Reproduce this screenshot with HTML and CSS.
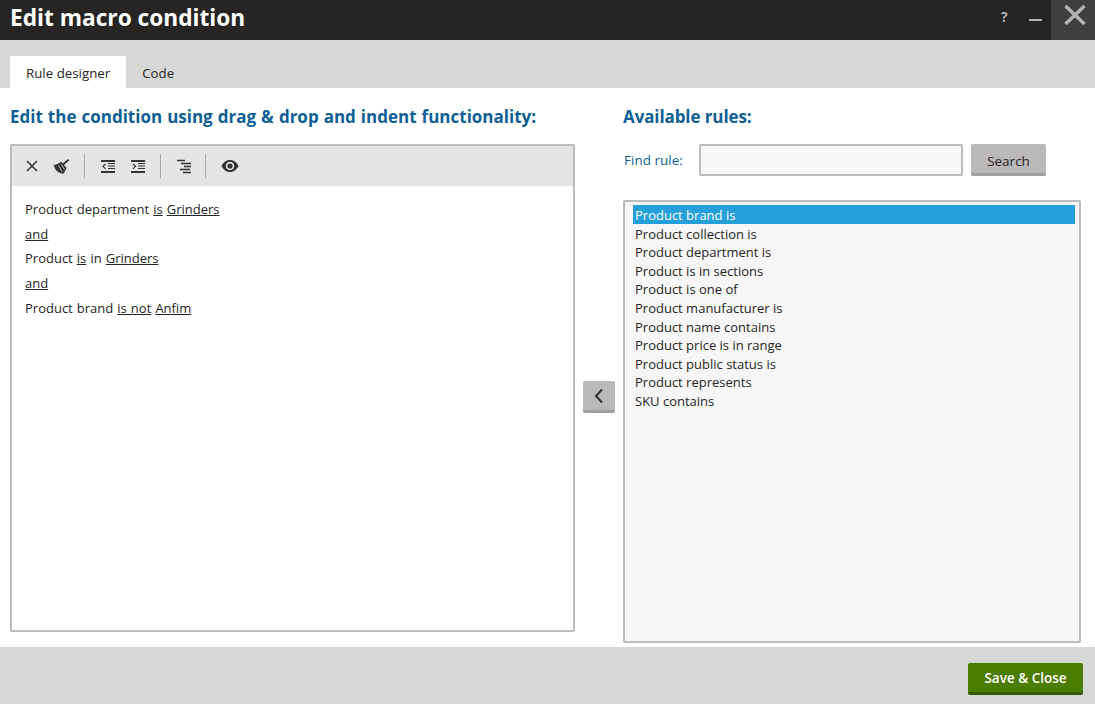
FILE: index.html
```html
<!DOCTYPE html>
<html lang="en">

<head>
    <meta charset="UTF-8">
    <title>Edit macro condition</title>
    <link rel="stylesheet" href="styles.css">
</head>

<body>
    <div class="dialog">
        <div class="titlebar">
            <div class="title">Edit macro condition</div>
            <div class="help">?</div>
            <div class="minimize"></div>
            <div class="close">
                <svg width="24" height="22" viewBox="0 0 24 22">
                    <path d="M2.500 2L21.500 20M21.500 2L2.500 20" stroke="#b4b4b4" stroke-width="3.400" fill="none" />
                </svg>
            </div>
        </div>
        <div class="tabs">
            <div class="tab active">Rule designer</div>
            <div class="tab">Code</div>
        </div>
        <div class="main">
            <div class="left">
                <h2 class="heading heading-long">Edit the condition using drag &amp; drop and indent functionality:</h2>
                <div class="editor">
                    <div class="toolbar">
                        <svg class="tool" width="15" height="16" viewBox="0 0 15 16">
                            <path d="M3 3L13 13M13 3L3 13" stroke="#333" stroke-width="1.500" fill="none" />
                        </svg>
                        <svg class="tool" width="17" height="18" viewBox="0 0 17 18">
                            <path d="M10 7.500L15.500 2.800" stroke="#333" stroke-width="2" fill="none" />
                            <path d="M0.500 8C3 8 6 6.500 8 4.800L13.500 10.800C12.800 13.500 11.500 15.500 10 17L7.800 15.800L7.600 16.600L5.600 15L5.400 15.600L3.600 13.500L3.200 13.800L2 11.500Z" fill="#333" />
                            <path d="M5.500 8.500L9 14.500M8.500 7.500L11.500 12.500" stroke="#e4e4e4" stroke-width="0.800" fill="none" />
                        </svg>
                        <span class="sep"></span>
                        <svg class="tool" width="16" height="14" viewBox="0 0 16 14">
                            <path d="M1 2H15M1 13H15" stroke="#333" stroke-width="2" fill="none" />
                            <path d="M8 4.500H15M8 7H15M8 9.500H15" stroke="#333" stroke-width="1.200" fill="none" />
                            <path d="M5.500 4.800L3 7.300L5.500 9.800" stroke="#333" stroke-width="1.200" fill="none" />
                        </svg>
                        <svg class="tool" width="16" height="14" viewBox="0 0 16 14">
                            <path d="M1 2H15M1 13H15" stroke="#333" stroke-width="2" fill="none" />
                            <path d="M8 4.500H15M8 7H15M8 9.500H15" stroke="#333" stroke-width="1.200" fill="none" />
                            <path d="M3 4.800L5.500 7.300L3 9.800" stroke="#333" stroke-width="1.200" fill="none" />
                        </svg>
                        <span class="sep"></span>
                        <svg class="tool" width="15" height="15" viewBox="0 0 15 15">
                            <path d="M1 1.500H9M5 4.500H15M8 7.500H15M4 10.500H14M7 13.500H15" stroke="#333" stroke-width="1.300" fill="none" />
                        </svg>
                        <span class="sep"></span>
                        <svg class="tool" width="18" height="14" viewBox="0 0 18 14">
                            <path fill-rule="evenodd" d="M9 1C13 1 16 3.700 17.500 7C16 10.300 13 13 9 13C5 13 2 10.300 0.500 7C2 3.700 5 1 9 1ZM9 2.800C6.700 2.800 4.800 4.700 4.800 7C4.800 9.300 6.700 11.200 9 11.200C11.300 11.200 13.200 9.300 13.200 7C13.200 4.700 11.300 2.800 9 2.800Z" fill="#333" />
                            <circle cx="9" cy="7" r="2.600" fill="#333" />
                        </svg>
                    </div>
                    <div class="condition">
                        <div class="line">Product department <u>is</u> <u>Grinders</u></div>
                        <div class="line"><u>and</u></div>
                        <div class="line">Product <u>is</u> in <u>Grinders</u></div>
                        <div class="line"><u>and</u></div>
                        <div class="line">Product brand <u>is not</u> <u>Anfim</u></div>
                    </div>
                </div>
            </div>
            <div class="middle">
                <button class="arrow-btn">
                    <svg width="10" height="16" viewBox="0 0 10 16">
                        <path d="M8 1.500L2 8L8 14.500" stroke="#333" stroke-width="2" fill="none" />
                    </svg>
                </button>
            </div>
            <div class="right">
                <h2 class="heading heading-short">Available rules:</h2>
                <div class="find">
                    <label class="find-label" for="findRule">Find rule:</label>
                    <input class="find-input" type="text" id="findRule">
                    <button class="search-btn">Search</button>
                </div>
                <div class="rules">
                    <div class="rule selected">Product brand is</div>
                    <div class="rule">Product collection is</div>
                    <div class="rule">Product department is</div>
                    <div class="rule">Product is in sections</div>
                    <div class="rule">Product is one of</div>
                    <div class="rule">Product manufacturer is</div>
                    <div class="rule">Product name contains</div>
                    <div class="rule">Product price is in range</div>
                    <div class="rule">Product public status is</div>
                    <div class="rule">Product represents</div>
                    <div class="rule">SKU contains</div>
                </div>
            </div>
        </div>
        <div class="footer">
            <button class="save-btn">Save &amp; Close</button>
        </div>
    </div>
</body>

</html>
```

FILE: styles.css
```css
html,
body {
    margin: 0;
    padding: 0;
    height: 100%;
    overflow: hidden;
}

body {
    font-family: "Open Sans", "Liberation Sans", sans-serif;
    font-size: 13px;
    color: #262524;
    background-color: #fff;
}

.dialog {
    display: flex;
    flex-direction: column;
    height: 704px;
}

.titlebar {
    display: flex;
    align-items: center;
    height: 40px;
    padding-left: 10px;
    background-color: #262524;
}

.title {
    flex: 1;
    margin-top: -6px;
    font-size: 22.700px;
    font-weight: 700;
    color: #fff;
}

.help {
    width: 28px;
    margin-top: -7px;
    font-size: 14px;
    font-weight: 700;
    color: #b4b4b4;
}

.minimize {
    width: 13px;
    height: 2px;
    margin-right: 9px;
    background-color: #b4b4b4;
}

.close {
    display: flex;
    justify-content: center;
    box-sizing: border-box;
    width: 44px;
    height: 40px;
    padding: 4px 0 0 4px;
    background-color: #403f3e;
}

.tabs {
    display: flex;
    align-items: flex-end;
    height: 48px;
    padding-left: 10px;
    background-color: #d6d8d5;
}

.tab {
    height: 32px;
    padding: 0 16px;
    font-size: 13.300px;
    line-height: 34px;
}

.tab.active {
    background-color: #fff;
}

.main {
    flex: 1;
    display: grid;
    grid-template-columns: 565px 48px 458px;
    padding-left: 10px;
    background-color: #fff;
}

.heading {
    margin: 16px 0 15px;
    height: 25px;
    font-size: 17px;
    line-height: 25px;
    font-weight: 700;
    color: #0f5f94;
}

.heading-long {
    word-spacing: 0.600px;
}

.heading-short {
    letter-spacing: -0.100px;
}

.left {
    display: flex;
    flex-direction: column;
}

.editor {
    height: 488px;
    box-sizing: border-box;
    border: 2px solid #bcbcbc;
    border-radius: 2px;
}

.toolbar {
    display: flex;
    align-items: center;
    height: 40px;
    padding-left: 12px;
    background-color: #e4e4e4;
}

.tool {
    margin-right: 14px;
}

.sep {
    width: 1px;
    height: 24px;
    margin-right: 15px;
    background-color: #a8a8a8;
}

.condition {
    padding: 11px 13px;
    word-spacing: 0.700px;
}

.line {
    height: 24.700px;
    line-height: 24.700px;
}

.middle {
    display: flex;
    justify-content: center;
    padding-top: 293px;
}

.arrow-btn {
    display: flex;
    align-items: center;
    justify-content: center;
    width: 32px;
    height: 32px;
    padding: 0;
    border: 0;
    border-bottom: 3px solid #a09e9e;
    border-radius: 2px;
    background-color: #bab8b8;
}

.right {
    display: flex;
    flex-direction: column;
}

.find {
    display: flex;
    align-items: center;
    height: 32px;
    margin-bottom: 24px;
}

.find-label {
    width: 75px;
    padding-left: 1px;
    font-size: 13.500px;
    color: #0f5f94;
}

.find-input {
    box-sizing: border-box;
    width: 264px;
    height: 32px;
    margin: 0 8px 0 0;
    border: 2px solid #bcbcbc;
    border-radius: 2px;
    background-color: #f6f6f6;
}

.search-btn {
    box-sizing: border-box;
    width: 75px;
    height: 32px;
    padding: 5px 0 0;
    border: 0;
    border-bottom: 3px solid #a09e9e;
    border-radius: 2px;
    font-family: inherit;
    font-size: 13.500px;
    color: #262524;
    background-color: #bab8b8;
}

.rules {
    box-sizing: border-box;
    height: 443px;
    padding: 3px 4px 0 8px;
    border: 2px solid #bcbcbc;
    border-radius: 2px;
    background-color: #f6f6f6;
}

.rule {
    box-sizing: border-box;
    height: 18.600px;
    padding: 1px 0 0 2px;
    line-height: 18.600px;
}

.rule.selected {
    color: #fff;
    background-color: #25a0da;
}

.footer {
    display: flex;
    justify-content: flex-end;
    align-items: flex-start;
    height: 57px;
    box-sizing: border-box;
    padding: 16px 12px 0 0;
    background-color: #d6d8d5;
}

.save-btn {
    box-sizing: border-box;
    width: 115px;
    height: 32px;
    padding: 0;
    border: 0;
    border-bottom: 3px solid #355a00;
    border-radius: 2px;
    font-family: inherit;
    font-size: 13.500px;
    font-weight: 600;
    color: #fff;
    background-color: #4a7c00;
}
```
